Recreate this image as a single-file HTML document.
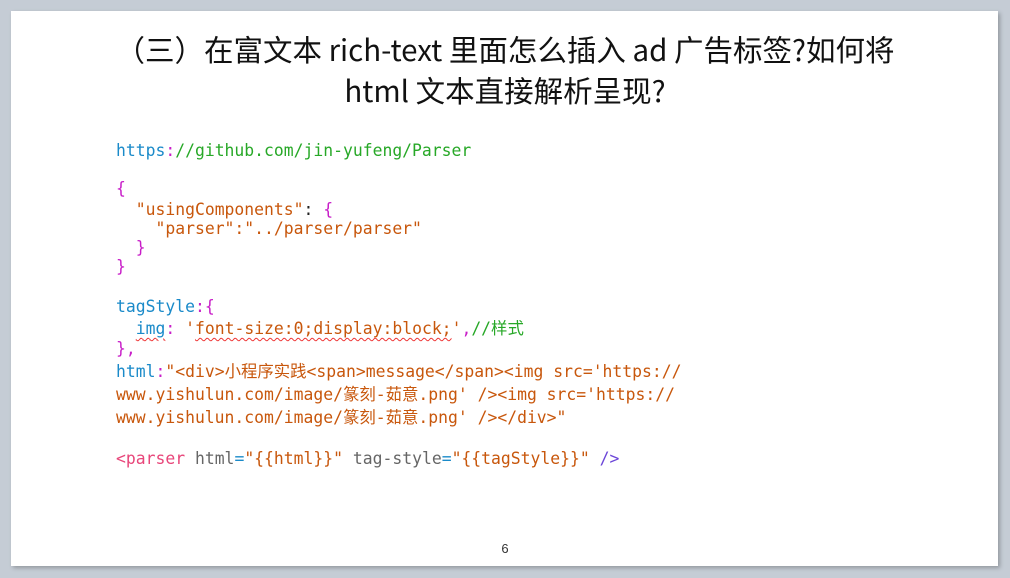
<!DOCTYPE html>
<html><head><meta charset="utf-8"><style>
html,body{margin:0;padding:0}
body{width:1010px;height:578px;background:#c5ccd5;position:relative;overflow:hidden}
.slide{position:absolute;left:11px;top:11px;width:987px;height:555px;background:#fff;box-shadow:2px 2px 4px rgba(0,0,0,0.25)}
.title{position:absolute;left:0;width:1010px;text-align:center;font-family:"Noto Sans CJK SC",sans-serif;font-size:29.5px;color:#111;line-height:41px;top:29px}
.code{position:absolute;left:116px;font-family:"DejaVu Sans Mono","Noto Sans CJK SC",monospace;font-size:16.4px;white-space:pre;line-height:20px}
.b{color:#1a8ac9}.g{color:#27a827}.m{color:#c81ec8}.o{color:#c8570c}.k{color:#222}.p{color:#e8467a}.gr{color:#666}.v{color:#6b45d8}
.sq{text-decoration:underline wavy #e33;text-decoration-thickness:1px;text-underline-offset:3px}
.pn{position:absolute;top:541px;left:0;width:1010px;text-align:center;font-family:"Liberation Sans",sans-serif;font-size:13px;color:#333}
</style></head><body>
<div class="slide"></div>
<div class="title">（三）在富文本 rich-text 里面怎么插入 ad 广告标签?如何将<br>html 文本直接解析呈现?</div>
<div class="code" style="top:141px"><span class="b">https</span><span class="m">:</span><span class="g">//github.com/jin-yufeng/Parser</span></div>
<div class="code" style="top:179px"><span class="m">{</span></div>
<div class="code" style="top:200px">  <span class="o">"usingComponents"</span><span class="k">:</span> <span class="m">{</span></div>
<div class="code" style="top:219px">    <span class="o">"parser":"../parser/parser"</span></div>
<div class="code" style="top:238px">  <span class="m">}</span></div>
<div class="code" style="top:257px"><span class="m">}</span></div>
<div class="code" style="top:297px"><span class="b">tagStyle</span><span class="m">:{</span></div>
<div class="code" style="top:319px">  <span class="b sq">img</span><span class="m">:</span> <span class="o">'<span class="sq">font-size:0;display:block;</span>'</span><span class="m">,</span><span class="g">//样式</span></div>
<div class="code" style="top:339px"><span class="m">},</span></div>
<div class="code" style="top:362px"><span class="b">html</span><span class="m">:</span><span class="o">"&lt;div&gt;小程序实践&lt;span&gt;message&lt;/span&gt;&lt;img src='https://</span></div>
<div class="code" style="top:385px"><span class="o">www.yishulun.com/image/篆刻-茹意.png' /&gt;&lt;img src='https://</span></div>
<div class="code" style="top:408px"><span class="o">www.yishulun.com/image/篆刻-茹意.png' /&gt;&lt;/div&gt;"</span></div>
<div class="code" style="top:449px"><span class="p">&lt;parser</span> <span class="gr">html</span><span class="b">=</span><span class="o">"{{html}}"</span> <span class="gr">tag-style</span><span class="b">=</span><span class="o">"{{tagStyle}}"</span> <span class="v">/&gt;</span></div>
<div class="pn">6</div>
</body></html>
